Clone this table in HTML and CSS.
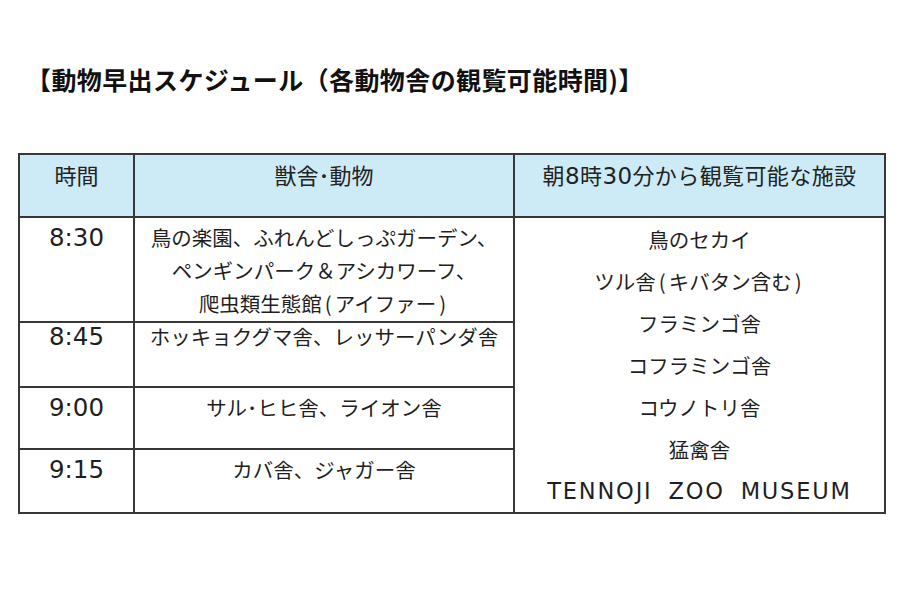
FILE: index.html
```html
<!DOCTYPE html>
<html lang="ja">
<head>
<meta charset="utf-8">
<title>動物早出スケジュール</title>
<link rel="stylesheet" href="styles.css">
</head>
<body>
<div class="page">
  <h1 class="title">【動物早出スケジュール（各動物舎の観覧可能時間)】</h1>
  <table class="schedule">
    <colgroup>
      <col class="c-time">
      <col class="c-house">
      <col class="c-open">
    </colgroup>
    <thead>
      <tr class="r-head">
        <th>時間</th>
        <th>獣舎･動物</th>
        <th class="h-open">朝<span class="num">8</span>時<span class="num">30</span>分から観覧可能な施設</th>
      </tr>
    </thead>
    <tbody>
      <tr class="r1">
        <td class="time">8:30</td>
        <td class="house">鳥の楽園、ふれんどしっぷガーデン、<br>ペンギンパーク＆アシカワーフ、<br>爬虫類生態館<span class="p">(</span>アイファー<span class="p">)</span></td>
        <td class="open" rowspan="4">
          <div>鳥のセカイ</div>
          <div>ツル舎<span class="p">(</span>キバタン含む<span class="p">)</span></div>
          <div>フラミンゴ舎</div>
          <div>コフラミンゴ舎</div>
          <div>コウノトリ舎</div>
          <div>猛禽舎</div>
          <div class="latin">TENNOJI ZOO MUSEUM</div>
        </td>
      </tr>
      <tr class="r2">
        <td class="time">8:45</td>
        <td class="house">ホッキョクグマ舎、レッサーパンダ舎</td>
      </tr>
      <tr class="r3">
        <td class="time">9:00</td>
        <td class="house">サル･ヒヒ舎、ライオン舎</td>
      </tr>
      <tr class="r4">
        <td class="time">9:15</td>
        <td class="house">カバ舎、ジャガー舎</td>
      </tr>
    </tbody>
  </table>
</div>
</body>
</html>
```

FILE: styles.css
```css
html, body {
  margin: 0;
  padding: 0;
  background: #ffffff;
}

body {
  font-family: "Noto Sans CJK JP", "Noto Sans", sans-serif;
  color: #1f1f1f;
}

.page {
  padding: 61px 0 0 18px;
}

.title {
  margin: 0 0 0 8px;
  font-size: 25px;
  line-height: 36px;
  font-weight: 700;
  color: #111111;
  letter-spacing: 0.4px;
}

.schedule {
  margin-top: 56px;
  border-collapse: collapse;
  table-layout: fixed;
  width: 866px;
}

.c-time { width: 115px; }
.c-house { width: 380px; }
.c-open { width: 371px; }

.schedule th,
.schedule td {
  border: 2px solid #383838;
  text-align: center;
  vertical-align: top;
  padding: 3px 0 0 0;
  font-size: 20.5px;
  line-height: 33px;
  font-weight: 400;
}

.schedule th {
  background: #cdeaf7;
  color: #222222;
  font-size: 22px;
}

.schedule th.h-open {
  letter-spacing: 0.4px;
}

.num {
  font-family: "DejaVu Sans", sans-serif;
  font-size: 23px;
}

.p {
  padding: 0 3px;
}

.r-head { height: 63px; }
.r1 { height: 105px; }
.r2 { height: 64px; }
.r3 { height: 62px; }
.r4 { height: 64px; }

.schedule td.time {
  font-family: "DejaVu Sans", sans-serif;
  font-size: 24.5px;
}

.r2 td {
  padding-top: 0;
  line-height: 27px;
}

.schedule td.open {
  padding-top: 0;
  line-height: 42px;
}

.latin {
  font-family: "DejaVu Sans", sans-serif;
  font-size: 22.5px;
  letter-spacing: 1.8px;
  word-spacing: 7px;
}
```
